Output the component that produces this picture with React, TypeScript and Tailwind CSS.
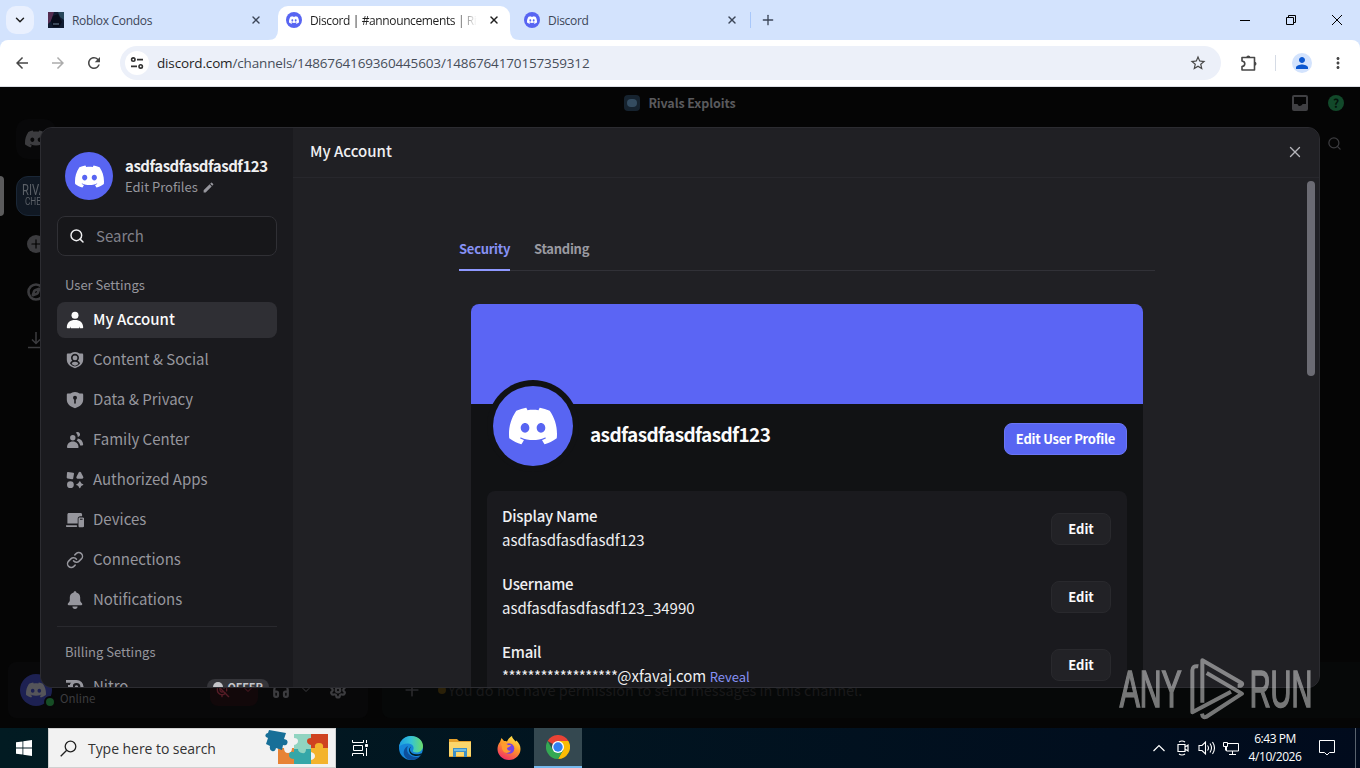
import React from "react";
import { SiDiscord } from "react-icons/si";
import {
  MdArrowBack,
  MdArrowForward,
  MdRefresh,
  MdStarBorder,
  MdMoreVert,
  MdPerson,
  MdEdit,
} from "react-icons/md";
import {
  ChevronDown,
  ChevronUp,
  Compass,
  Download,
  Headphones,
  Link,
  MicOff,
  Plus,
  Search,
  Settings,
  X,
} from "lucide-react";

interface IconProps {
  className?: string;
}

interface NavItem {
  label: string;
  icon: React.ReactNode;
  active?: boolean;
}

interface AccountField {
  label: string;
  value: React.ReactNode;
}

function AccountIcon({ className }: IconProps) {
  return (
    <svg viewBox="0 0 18 18" className={className} fill="currentColor">
      <circle cx="9" cy="4.3" r="3.5" />
      <path d="M.8 16.2C1.2 11.5 4 9 9 9s7.800 2.500 8.200 7.200c0 .7-.4 1-1 1H14l-.6-1.700-.2 1.700H4.800l-.2-1.700-.6 1.700H1.800c-.6 0-1-.3-1-1z" />
    </svg>
  );
}

function ShieldUserIcon({ className }: IconProps) {
  return (
    <svg viewBox="0 0 18 18" className={className}>
      <path
        fill="currentColor"
        d="M6.300 1.400C7.500.7 10.500.7 11.700 1.400c1.200.8 2.500 1.200 4.300 1.200.7 0 1.200.5 1.200 1.200v4.700c0 4.300-3.300 7.300-8.200 8.700C4.100 15.800.8 12.800.8 8.500V3.800c0-.7.5-1.200 1.200-1.200 1.800 0 3.100-.4 4.300-1.200z"
      />
      <path fill="#1a1a1e" d="M4 12.500c.4-1.500 1.300-2.300 2.300-2.700a4 4 0 1 1 5.400 0c1 .4 1.900 1.200 2.300 2.700-1.300 1.500-3 2.500-5 3.100-2-.6-3.700-1.600-5-3.100z" />
      <circle cx="9" cy="6.900" r="2.400" fill="currentColor" />
      <path fill="currentColor" d="M5.700 13c.3-1.600 1.300-2.300 3.300-2.300s3 .7 3.300 2.300c-1 .8-2 1.300-3.300 1.700-1.300-.4-2.300-.9-3.300-1.700z" />
    </svg>
  );
}

function ShieldLockIcon({ className }: IconProps) {
  return (
    <svg viewBox="0 0 18 18" className={className}>
      <path
        fill="currentColor"
        d="M6.300 1.400C7.500.7 10.500.7 11.700 1.400c1.200.8 2.500 1.200 4.300 1.200.7 0 1.200.5 1.200 1.200v4.700c0 4.300-3.300 7.300-8.200 8.700C4.100 15.800.8 12.800.8 8.500V3.800c0-.7.5-1.200 1.200-1.200 1.800 0 3.100-.4 4.300-1.200z"
      />
      <circle cx="9" cy="6.700" r="2" fill="#1a1a1e" />
      <path d="M9 7v5" stroke="#1a1a1e" strokeWidth="1.600" strokeLinecap="round" />
    </svg>
  );
}

function FamilyIcon({ className }: IconProps) {
  return (
    <svg viewBox="0 0 18 18" className={className} fill="currentColor">
      <circle cx="6.800" cy="6.800" r="2.700" />
      <path d="M1 16.300c.2-3.600 2.200-5.800 5.800-5.800s5.600 2.200 5.800 5.800c0 .5-.4.8-.8.800H1.800c-.4 0-.8-.3-.8-.8z" />
      <path d="M9.800 1.700a2.500 2.500 0 1 1 2 4.300c0-1.800-.8-3.300-2-4.300zM11.800 7.400c3.400.5 5.200 2.900 5.400 6.200 0 .5-.3.800-.8.8h-2.200c-.6-2.400-1.700-3.800-3.600-4.800.6-.6 1-1.300 1.200-2.200z" />
    </svg>
  );
}

function AppsIcon({ className }: IconProps) {
  return (
    <svg viewBox="0 0 18 18" className={className} fill="currentColor">
      <path d="M2 .9l5.200.8c.6.1.9.5.8 1.100l-.8 4.600c-.1.6-.5.900-1.100.8L1.500 7.400C.9 7.300.6 6.900.7 6.300L1 1.700C1.100 1.100 1.400.8 2 .9z" />
      <path d="M12.700 1.600c.6-1 1.700-1 2.300 0l2.200 4.200c.5 1-.1 1.900-1.100 1.900h-4.500c-1 0-1.600-.9-1.100-1.900z" />
      <circle cx="4.400" cy="13.700" r="3.400" />
      <path d="M13.800 10.200c.4 0 .6.200.7.500.4 1.300 1.100 2 2.300 2.400.7.200.7 1 0 1.200-1.200.4-1.900 1.100-2.300 2.300-.2.700-1.200.7-1.400 0-.4-1.200-1.100-1.900-2.300-2.300-.7-.2-.7-1 0-1.200 1.200-.4 1.900-1.100 2.300-2.400.1-.3.300-.5.700-.5z" />
    </svg>
  );
}

function DevicesIcon({ className }: IconProps) {
  return (
    <svg viewBox="0 0 18 18" className={className} fill="currentColor">
      <path d="M3 2h11.500c1 0 1.600.6 1.600 1.600v1.600h-1.900c-1.500 0-2.500 1-2.500 2.500v4.800H1.400V3.600C1.400 2.600 2 2 3 2zM.7 14.200h9.600c.6 0 .9.300.9.800s-.3.900-.9.900H.7c-.5 0-.8-.4-.8-.9s.3-.8.8-.8z" />
      <path
        fillRule="evenodd"
        d="M13.800 6.500h3c.8 0 1.300.5 1.300 1.300v7.200c0 .8-.5 1.300-1.300 1.300h-3c-.8 0-1.300-.5-1.300-1.300V7.800c0-.8.5-1.300 1.300-1.300zm.2 1.300v1h2.600v-1z"
      />
    </svg>
  );
}

function BellIcon({ className }: IconProps) {
  return (
    <svg viewBox="0 0 18 18" className={className} fill="currentColor">
      <path d="M9 .3c.8 0 1.300.5 1.300 1.200 2.500.6 3.900 2.400 3.900 5v2.700c0 1.200.7 1.900 1.600 2.800.8.800.6 2.300-.6 2.300H2.800c-1.200 0-1.400-1.500-.6-2.300.9-.9 1.600-1.600 1.600-2.800V6.500c0-2.600 1.400-4.400 3.900-5C7.700.8 8.200.3 9 .3zM6.400 15.500h5.200c0 1.300-1.100 2.400-2.600 2.400s-2.600-1.100-2.600-2.400z" />
    </svg>
  );
}

function NitroIcon({ className }: IconProps) {
  return (
    <svg viewBox="0 0 18 18" className={className}>
      <path d="M0 2h10v2.800H0zM2 7h5v2.500H2z" fill="currentColor" />
      <circle cx="10.500" cy="9" r="5.500" fill="none" stroke="currentColor" strokeWidth="3.200" />
      <circle cx="10.500" cy="9" r="1.700" fill="currentColor" />
    </svg>
  );
}

const navItems: NavItem[] = [
  { label: "My Account", icon: <AccountIcon className="size-[18px]" />, active: true },
  { label: "Content & Social", icon: <ShieldUserIcon className="size-[18px]" /> },
  { label: "Data & Privacy", icon: <ShieldLockIcon className="size-[18px]" /> },
  { label: "Family Center", icon: <FamilyIcon className="size-[18px]" /> },
  { label: "Authorized Apps", icon: <AppsIcon className="size-[18px]" /> },
  { label: "Devices", icon: <DevicesIcon className="size-[18px]" /> },
  { label: "Connections", icon: <Link className="size-[18px]" strokeWidth={2} /> },
  { label: "Notifications", icon: <BellIcon className="size-[18px]" /> },
];

const fields: AccountField[] = [
  { label: "Display Name", value: "asdfasdfasdfasdf123" },
  { label: "Username", value: "asdfasdfasdfasdf123_34990" },
  {
    label: "Email",
    value: (
      <>
        <span className="tracking-[-0.6px]">******************</span>@xfavaj.com{" "}
        <span className="text-[13px] text-[#8791f5]">Reveal</span>
      </>
    ),
  },
];

function DiscordBadge() {
  return (
    <span className="flex size-4 shrink-0 items-center justify-center rounded-full bg-[#5865f2] text-white">
      <SiDiscord className="size-[10px]" />
    </span>
  );
}

function TabStrip() {
  return (
    <div className="flex h-10 shrink-0 items-center bg-[#d3e3fd] font-['Open_Sans','Noto_Sans',sans-serif] text-xs tracking-[-0.3px] text-[#3c4658]">
      <div className="ml-1.5 flex h-7 w-7 items-center justify-center rounded-[10px] bg-[#e9f0fe]">
        <ChevronDown className="size-3.5 text-[#1f1f1f]" strokeWidth={2.5} />
      </div>
      <div className="ml-3.5 flex w-[230px] items-center">
        <svg viewBox="0 0 16 16" className="size-4">
          <path fill="#101c32" d="M0 0h16v16H0z" />
          <path fill="#542c50" d="M0 0h6L3 9l-3 3z" />
          <path fill="#27475b" d="M10 0h6v8l-4-3z" />
          <path fill="#080d1c" d="M5 4l5-2 4 8-3 5H5L3 9z" />
          <path stroke="#71879b" d="M5 12h6" />
        </svg>
        <span className="ml-2 flex-1 pt-0.5">Roblox Condos</span>
        <X className="mr-4 size-3" strokeWidth={2.8} />
      </div>
      <div className="relative flex h-[34px] w-[232px] items-center self-end rounded-t-[10px] bg-white pb-1.5 pl-2 text-[#1f1f1f]">
        <svg viewBox="0 0 10 10" className="absolute bottom-0 -left-2.5 size-2.5" fill="#fff">
          <path d="M10 0v10H0Q10 10 10 0z" />
        </svg>
        <svg viewBox="0 0 10 10" className="absolute -right-2.5 bottom-0 size-2.5" fill="#fff">
          <path d="M0 0v10h10Q0 10 0 0z" />
        </svg>
        <DiscordBadge />
        <span className="ml-2 w-[168px] overflow-hidden pt-0.5 tracking-[-0.38px] whitespace-nowrap [mask-image:linear-gradient(to_right,black_145px,transparent_167px)]">
          Discord | #announcements | Rivals
        </span>
        <X className="ml-2.5 size-3 shrink-0" strokeWidth={2.8} />
      </div>
      <div className="flex w-[228px] items-center pl-3.5">
        <DiscordBadge />
        <span className="ml-2 flex-1 pt-0.5">Discord</span>
        <X className="size-3" strokeWidth={2.8} />
      </div>
      <div className="ml-3 h-4 w-px bg-[#a8c7fa]" />
      <Plus className="ml-[9px] size-4" strokeWidth={2} />
      <div className="ml-auto flex items-center text-black">
        <div className="h-px w-[10px] bg-black" />
        <svg viewBox="0 0 10 10" className="ml-9 size-[10px]" fill="none" stroke="currentColor">
          <path d="M.5 2.500h7v7h-7zM2.500 2V.5h7v7H8" />
        </svg>
        <svg viewBox="0 0 10 10" className="mr-[18px] ml-9 size-[10px]" stroke="currentColor">
          <path d="M0 0l10 10M10 0L0 10" />
        </svg>
      </div>
    </div>
  );
}

function Toolbar() {
  return (
    <div className="bg-[#d3e3fd]">
      <div className="flex h-[47px] items-center rounded-t-lg border-b border-[#dcdfe5] bg-white text-[#474747]">
        <MdArrowBack className="ml-[13px] size-[18px]" />
        <MdArrowForward className="ml-[18px] size-[18px] text-[#acacac]" />
        <MdRefresh className="ml-[18px] size-[18px]" />
        <div className="ml-[17px] flex h-[34px] w-[1101px] items-center rounded-full bg-[#ecf0f9] pl-[5px]">
          <div className="flex size-6 items-center justify-center rounded-full bg-white">
            <svg viewBox="0 0 14 14" className="size-3.5" fill="none" stroke="#303030" strokeWidth="1.600">
              <circle cx="3.300" cy="3.600" r="1.700" />
              <path d="M7 3.600h6M1 10.400h6" />
              <circle cx="10.700" cy="10.400" r="1.700" />
            </svg>
          </div>
          <span className="ml-2 font-['Open_Sans','Noto_Sans',sans-serif] text-[13.500px] tracking-[-0.150px] text-[#474e5a]">
            <span className="text-[#1f1f1f]">discord.com</span>/channels/1486764169360445603/1486764170157359312
          </span>
          <MdStarBorder className="mr-[14px] ml-auto size-[18px]" />
        </div>
        <svg viewBox="0 0 18 18" className="ml-[19px] size-[18px]" fill="none" stroke="currentColor" strokeWidth="1.600">
          <path d="M2 3.500h12.500v12.500H2v-3.500q2.800-.5 2.800-2.800T2 7z" strokeLinejoin="round" />
          <path fill="currentColor" stroke="none" d="M6.300 3.500a2 2 0 0 1 4 0zM14.500 7.700a2 2 0 0 1 0 4z" />
        </svg>
        <div className="ml-[17px] h-4 w-px bg-[#d5dbe5]" />
        <div className="ml-4 flex size-5 items-center justify-center rounded-full bg-[#d3e3fd] text-[#0b57d0]">
          <MdPerson className="size-[18px]" />
        </div>
        <MdMoreVert className="ml-[17px] size-[18px]" />
      </div>
    </div>
  );
}

/* The dimmed app behind the settings window */
function DimmedApp() {
  return (
    <div className="flex h-full flex-col bg-[#050505] text-[#3c3c3f]">
      <div className="relative flex h-8 shrink-0 items-center justify-center gap-2 text-[12.500px] font-bold tracking-[-0.1px] text-[#5a5a5d]">
        <span className="flex size-4 items-center justify-center rounded-[4px] bg-[#16232f]">
          <span className="h-2 w-2.5 rounded-sm bg-[#344c60]" />
        </span>
        <span>Rivals Exploits</span>
        <div className="absolute right-4 flex gap-5">
          <svg viewBox="0 0 16 16" className="size-4">
            <path fill="#404043" fillRule="evenodd" d="M2 0h12q2 0 2 2v12q0 2-2 2H2q-2 0-2-2V2q0-2 2-2zm0 2v7h3q1 0 1 1 1 2 4 0 0-1 1-1h3V2z" />
          </svg>
          <span className="flex size-4 items-center justify-center rounded-full bg-[#12492a] text-xs text-[#03130a]">?</span>
        </div>
      </div>
      <div className="flex flex-1">
        <div className="flex w-[72px] flex-col items-center">
          <div className="flex size-10 items-center justify-center rounded-xl bg-[#080809]">
            <SiDiscord className="size-[22px]" />
          </div>
          <div className="mt-[17px] flex h-10 w-full items-center">
            <span className="h-10 w-1 rounded-r-sm bg-[#5b5b5c]" />
            <span className="ml-3 flex size-10 flex-col justify-center rounded-xl border border-[#1a2737] bg-[#101823] pl-[5px] font-['Roboto'] leading-[12px] text-[#5b6067]">
              <span className="origin-left scale-x-75 text-[15px]">RIVALS</span>
              <span className="origin-left scale-x-75 pl-1 text-[11px]">CHEATS</span>
            </span>
          </div>
          <div className="mt-2 flex size-10 items-center justify-center">
            <span className="flex size-[18px] items-center justify-center rounded-full bg-[#3c3c3f] text-black">
              <Plus className="size-3.5" />
            </span>
          </div>
          <div className="mt-2 flex size-10 items-center justify-center">
            <Compass className="size-[18px]" strokeWidth={3.5} />
          </div>
          <div className="mt-2 flex size-10 items-center justify-center">
            <svg viewBox="0 0 18 18" className="size-[18px]" fill="none" stroke="currentColor" strokeWidth="1.500">
              <path d="M9 1v11M5 8.500l4 4 4-4M1 16.500h16" />
            </svg>
          </div>
        </div>
        <div className="ml-auto flex h-12 w-[36px] items-center justify-center">
          <Search className="mr-4 size-[15px]" />
        </div>
      </div>
      <div className="mb-2.5 flex h-[56px]">
        <div className="ml-2 flex w-[360px] items-center rounded-lg bg-[#080809] pl-3">
          <span className="relative flex size-8 items-center justify-center rounded-full bg-[#1d2152] text-[#55555a]">
            <SiDiscord className="size-5" />
            <span className="absolute -right-1 -bottom-0.5 size-3 rounded-full border-2 border-[#080809] bg-[#164d25]" />
          </span>
          <span className="mt-[18px] ml-2 w-[34px] text-[11.500px]">Online</span>
          <span className="ml-[116px] flex items-center gap-3 rounded-lg bg-[#12080a] px-1 py-2 text-[#551c26]">
            <MicOff className="size-4" />
            <ChevronDown className="size-3" />
          </span>
          <Headphones className="ml-[14px] size-[18px]" strokeWidth={3} />
          <ChevronDown className="ml-2.5 size-3" />
          <Settings className="ml-[17px] size-[18px]" strokeWidth={3} />
        </div>
        <div className="ml-[14px] flex flex-1 items-center rounded-l-lg bg-[#060808] pl-[20px] text-[#19191a]">
          <Plus className="size-5 text-[#29292c]" />
          <span className="ml-4 size-2 rounded-full bg-[#2a2008]" />
          <span className="ml-0.5 text-[14.500px]">You do not have permission to send messages in this channel.</span>
        </div>
      </div>
    </div>
  );
}

function SettingsSidebar() {
  return (
    <div className="flex w-[252px] shrink-0 flex-col bg-[#1a1a1e] px-4 text-[#96969d]">
      <div className="mt-6 flex h-12 items-center pl-2">
        <div className="flex size-12 shrink-0 items-center justify-center rounded-full bg-[#5865f2] text-white">
          <SiDiscord className="size-[29px]" />
        </div>
        <div className="ml-3 flex flex-col whitespace-nowrap">
          <span className="pb-px text-[15px] leading-[21px] font-bold tracking-[-0.480px] text-[#efeff1]">
            asdfasdfasdfasdf123
          </span>
          <span className="flex items-center gap-1 text-[13px] leading-[20px]">
            Edit Profiles <MdEdit className="size-[13px]" />
          </span>
        </div>
      </div>
      <div className="mt-4 flex h-10 w-[220px] shrink-0 items-center rounded-lg border border-[#303035] bg-[#17171a] pl-[11px] text-[#81818a]">
        <Search className="size-4 text-[#efeff1]" strokeWidth={2.2} />
        <span className="ml-[11px] text-[15px]">Search</span>
      </div>
      <span className="mt-[19px] pl-2 text-[13px] leading-[20px]">User Settings</span>
      <div className="mt-[7px] flex w-[220px] flex-col gap-1">
        {navItems.map((item) => (
          <div
            key={item.label}
            className={
              item.active
                ? "flex h-9 items-center rounded-lg bg-[#2f2f34] pl-[9px] font-medium text-[#fbfbfb]"
                : "flex h-9 items-center rounded-lg pl-[9px]"
            }
          >
            {item.icon}
            <span className="ml-[9px] pb-0.5 text-[15px]">{item.label}</span>
          </div>
        ))}
      </div>
      <div className="mt-2 h-px w-[220px] shrink-0 bg-[#29292e]" />
      <span className="mt-[15px] pl-2 text-[13px] leading-[20px]">Billing Settings</span>
      <div className="mt-[7px] flex h-9 w-[220px] shrink-0 items-center pl-[9px] text-[15px]">
        <NitroIcon className="size-[18px]" />
        <span className="ml-[9px] pb-0.5">Nitro</span>
        <span className="mr-2 ml-auto flex h-4 items-center gap-1 rounded-full bg-[#35353a] px-1.5 text-[11px] font-bold text-[#c4c4c8]">
          <span className="size-2.5 rounded-full bg-[#c4c4c8]" /> OFFER
        </span>
      </div>
    </div>
  );
}

function AccountPanel() {
  return (
    <div className="relative flex min-w-0 flex-1 flex-col bg-[#202024]">
      <div className="flex h-[50px] shrink-0 items-center justify-between border-b border-[#27272c] pr-[15px] pb-0.5 pl-[17px] text-[15px] font-medium text-[#efeff1]">
        My Account
        <X className="size-[18px] text-[#b5b5ba]" strokeWidth={1.800} />
      </div>
      <div className="mt-[57px] ml-[166px] flex h-9 w-[696px] shrink-0 gap-6 border-b border-[#313137] text-[13px] font-bold tracking-[-0.270px] text-[#9a9aa1]">
        <div className="h-9 w-[51px] border-b-2 border-[#8e98ff] leading-[27px] whitespace-nowrap text-[#8791f5]">
          Security
        </div>
        <div className="leading-[27px]">Standing</div>
      </div>
      <div className="mt-[33px] ml-[178px] flex w-[672px] flex-col rounded-t-lg bg-[#111214]">
        <div className="h-[100px] shrink-0 rounded-t-lg bg-[#5b65f4]" />
        <div className="flex h-[87px] shrink-0 pr-4 pl-4">
          <div className="-mt-6 flex size-[92px] items-center justify-center rounded-full bg-[#111214]">
            <div className="flex size-20 items-center justify-center rounded-full bg-[#5865f2] text-white">
              <SiDiscord className="size-12" />
            </div>
          </div>
          <span className="mt-4 ml-[11px] text-[19px] leading-[28px] font-bold tracking-[-0.620px] text-[#fbfbfb]">
            asdfasdfasdfasdf123
          </span>
          <button className="mt-[19px] ml-auto h-8 w-[123px] rounded-lg border border-[#6a75f4] bg-[#5865f2] text-[13px] font-bold tracking-[-0.250px] whitespace-nowrap text-white">
            Edit User Profile
          </button>
        </div>
        <div className="mx-4 flex flex-col gap-5 rounded-t-lg bg-[#1a1a1e] pt-[14px] pr-4 pl-[15px]">
          {fields.map((field) => (
            <div key={field.label} className="flex h-12 items-center justify-between">
              <div className="pb-0.5 text-[15px] leading-6 text-[#efeff1]">
                <div className="font-medium tracking-[-0.250px]">{field.label}</div>
                <div>{field.value}</div>
              </div>
              <button className="h-8 w-[60px] rounded-lg border border-[#29292d] bg-[#222226] text-[13px] font-bold text-[#fbfbfb]">
                Edit
              </button>
            </div>
          ))}
        </div>
      </div>
      <div className="absolute top-[53px] right-1 h-[195px] w-2 rounded-full bg-[#6b6b73]" />
    </div>
  );
}

function Watermark() {
  return (
    <svg
      viewBox="350 50 600 190"
      className="absolute top-[656.700px] left-[1116.700px] h-[63.300px] w-[200px] font-['Liberation_Sans',sans-serif]"
    >
      <g fill="#fff" stroke="#fff" opacity=".45">
        <text x="358" y="201" fontSize="154" strokeWidth="5" textLength="186" lengthAdjust="spacingAndGlyphs">
          ANY
        </text>
        <text x="748" y="201" fontSize="154" strokeWidth="5" textLength="188" lengthAdjust="spacingAndGlyphs">
          RUN
        </text>
        <g fill="none" strokeWidth="12" strokeLinejoin="round">
          <path d="M606 187V60l118 68q4 4-2 8l-10 0" />
          <path d="M594 78q-18-3-18 12v126l116-62" />
          <path d="M619 98l106 62-108 70q-10 4-12-10" />
        </g>
      </g>
    </svg>
  );
}

function EdgeIcon() {
  return (
    <svg viewBox="0 0 24 24" className="size-6">
      <defs>
        <linearGradient id="edgeTop">
          <stop stopColor="#1b9de2" />
          <stop offset=".5" stopColor="#35c3d5" />
          <stop offset="1" stopColor="#6bdc69" />
        </linearGradient>
      </defs>
      <circle cx="12" cy="12" r="12" fill="#1686d9" />
      <path fill="url(#edgeTop)" d="M0 11C1 4.500 5.800 0 12 0c7 0 12 4.600 12 10 0 4-3 6.500-6.500 6.500-3 0-4.200-1-3.500-2.200 2-3-.6-6.800-5-6.800-4 0-7.500 1.500-9 3.500z" />
      <path fill="#0d4f9d" d="M9 10c-3 5 1.500 11 8 11 2 0 3.500-.5 4.700-1.300C19.500 22.500 16 24 12.500 24 7 24 4 19 4.800 15.500 5.300 12.500 7 10.700 9 10z" />
      <path fill="#031b24" d="M12 10.500c-2.500 3-.5 7.500 5 7.800 2.500.2 4.500-.3 6-1.300-.6 1.400-1.300 2-2 2.600-6 1.400-10.500-1-10.800-5.100-.1-1.800.7-3.300 1.800-4z" />
    </svg>
  );
}

function FolderIcon() {
  return (
    <svg viewBox="0 0 22 20" className="h-5 w-[22px]">
      <path fill="#e5a02a" d="M0 1h8l2 2h12v16H0z" />
      <path fill="#fbd66b" d="M0 4h22v14H0z" />
      <path fill="#3d8fc6" d="M4 10h14v9h-3v-5H7v5H4z" />
      <path fill="#6fbbe2" d="M5 11h12v2H5z" />
      <path fill="#fbd66b" d="M9 16h4v2H9z" />
    </svg>
  );
}

function FirefoxIcon() {
  return (
    <svg viewBox="0 0 24 24" className="size-6">
      <defs>
        <linearGradient id="foxFlame" x1=".8" y1="0" x2=".3" y2="1">
          <stop stopColor="#fff04f" />
          <stop offset=".45" stopColor="#ff9a27" />
          <stop offset="1" stopColor="#f22c68" />
        </linearGradient>
      </defs>
      <path fill="url(#foxFlame)" d="M3 6l1.500-4L7 5c1 0 2 .1 3 .5C11 3 12.500 1.500 15 0c0 2.500 2 3.300 3.500 5.500l1-1C22 7 23.500 9.500 23.500 13c0 6-5 11-11.500 11S.5 19 .5 13C.5 10.500 1.300 8 3 6z" />
      <circle cx="12" cy="12.500" r="5.300" fill="#7542e5" />
      <path fill="#ff9b2e" d="M4 8c3-1.500 5-.5 7 1h3c-.5 2-2.500 2-4 3 0 2 1.500 3 4 2.500-2 3.500-7 3-8.500-.5C4.700 12 5 9.500 4 8z" />
    </svg>
  );
}

function ChromeIcon() {
  return (
    <svg viewBox="0 0 24 24" className="size-6">
      <path fill="#ea4335" d="M12 12L1.600 6A12 12 0 0 1 22.400 6z" />
      <path fill="#fbbc05" d="M12 12V6h10.400A12 12 0 0 1 12 24l5.200-9z" />
      <path fill="#34a853" d="M12 12l5.200 3L12 24A12 12 0 0 1 1.600 6l5.200 9z" />
      <circle cx="12" cy="12" r="6" fill="#fff" />
      <circle cx="12" cy="12" r="4.700" fill="#327ff0" />
    </svg>
  );
}

function PuzzleArt() {
  return (
    <svg viewBox="0 0 64 36" className="h-9 w-16">
      <path fill="#e78335" d="M13 18h6q0 5 4 5t4-5h3v16H13z" />
      <path fill="#35a7a8" d="M29 18h17v16H29v-5q-5 0-5-4t5-3z" />
      <path fill="#91d4c1" d="M29 4h17v15h-5q0 5-4 4t-4-4h-4v-4q4-1 4-4t-4-3z" />
      <path fill="#cf4220" d="M46 4h17v15H46v-4q-4-1-4-4t4-3z" />
      <path fill="#f3b32c" d="M46 18h4q-1-5 4-5t4 5h5v16H46v-4q4-1 4-4t-4-4z" />
      <path fill="#176f98" d="M4 0l17 3-2 6q5 1 3 5-1 2-4 1l-1 5-6-2q-1 4-4 3t-2-5L1 14l2-6Q-1 7 1 4q1-1 2-1z" />
    </svg>
  );
}

function Taskbar() {
  return (
    <div className="flex h-10 shrink-0 items-center bg-linear-to-r from-[#021b22] to-[#010b1d] font-['Open_Sans','Noto_Sans',sans-serif] text-white">
      <div className="flex w-12 justify-center">
        <svg viewBox="0 0 16 16" className="size-4" fill="currentColor">
          <path d="M0 2.300L6.500 1.400v6.200H0zM7.300 1.300L16 0v7.600H7.300zM0 8.400h6.500v6.200L0 13.700zM7.300 8.400H16V16l-8.700-1.300z" />
        </svg>
      </div>
      <div className="flex h-10 w-72 items-center border border-[#d0d0d0] bg-[#f2f2f2] pl-[11px] text-[#333]">
        <svg viewBox="0 0 17 17" className="size-[17px]" fill="none" stroke="#222" strokeWidth="1.300">
          <circle cx="10.500" cy="6.500" r="5.300" />
          <path d="M6.700 10.300L.7 16.300" />
        </svg>
        <span className="ml-[11px] text-[14px] tracking-[-0.050px]">Type here to search</span>
        <span className="mr-[6px] ml-auto">
          <PuzzleArt />
        </span>
      </div>
      <svg viewBox="0 0 17 16" className="ml-4 h-4 w-[17px]" fill="none" stroke="currentColor">
        <path d="M.5 0v2.500h11V0M1.500 5.500h9v5h-9zM.5 16v-2.500h11V16M14.500 0v3M14.500 8v8" />
        <path fill="currentColor" d="M13.500 4.500h2v2h-2z" />
      </svg>
      <div className="ml-[17px] flex h-10">
        <span className="flex w-[49px] items-center justify-center">
          <EdgeIcon />
        </span>
        <span className="flex w-[49px] items-center justify-center">
          <FolderIcon />
        </span>
        <span className="flex w-[49px] items-center justify-center">
          <FirefoxIcon />
        </span>
        <span className="ml-[1px] flex w-12 items-center justify-center border-b-2 border-[#76b9ed] bg-[#344850]">
          <ChromeIcon />
        </span>
      </div>
      <div className="ml-auto flex h-10 items-center">
        <svg viewBox="0 0 12 8" className="h-2 w-3" fill="none" stroke="currentColor" strokeWidth="1.200">
          <path d="M.5 7L6 1.500 11.500 7" />
        </svg>
        <svg viewBox="0 0 14 16" className="ml-[11px] h-4 w-3.5" fill="none" stroke="currentColor" strokeWidth="1.200">
          <path d="M3 2q3-2 6 0M3 14q3 2 6 0M2 4.500h7v7H2zM9 7l3-2v6L9 9" />
        </svg>
        <svg viewBox="0 0 18 16" className="ml-[8px] h-4 w-[18px]" fill="none" stroke="currentColor" strokeWidth="1.100">
          <path d="M1 5.500h3L7.500 2v12L4 10.500H1zM9.500 5.500q2 2.500 0 5M12 3.500q3 4.500 0 9M14.500 2q4 6 0 12" />
        </svg>
        <svg viewBox="0 0 16 16" className="ml-[7px] size-4" fill="none" stroke="currentColor">
          <path d="M5 3.500h10.500v7.500H3.500V7M9.500 11v3.500M6 14.500h7M.5 2.500h4v4h-4zM2.500 6.500v4" />
        </svg>
        <div className="ml-[4px] flex w-[64px] flex-col items-center text-[12px] leading-[18px] tracking-[-0.450px] whitespace-nowrap">
          <span>6:43 PM</span>
          <span>4/10/2026</span>
        </div>
        <svg viewBox="0 0 16 16" className="ml-3 size-4" fill="none" stroke="currentColor">
          <path d="M.5.5h15v12h-5L8 15l-2.500-2.500h-5z" />
        </svg>
        <span className="mr-1 ml-5 h-10 w-px bg-[#59636e]" />
      </div>
    </div>
  );
}

export default function App() {
  return (
    <div className="relative flex h-[768px] w-[1360px] flex-col overflow-hidden">
      <TabStrip />
      <Toolbar />
      <div className="relative min-h-0 flex-1 font-['Noto_Sans_CJK_SC','Noto_Sans',sans-serif]">
        <DimmedApp />
        <div className="absolute top-10 left-10 flex h-[561px] w-[1280px] overflow-hidden rounded-xl border border-[#2c2c31] bg-[#202024]">
          <SettingsSidebar />
          <AccountPanel />
        </div>
      </div>
      <Taskbar />
      <Watermark />
    </div>
  );
}
